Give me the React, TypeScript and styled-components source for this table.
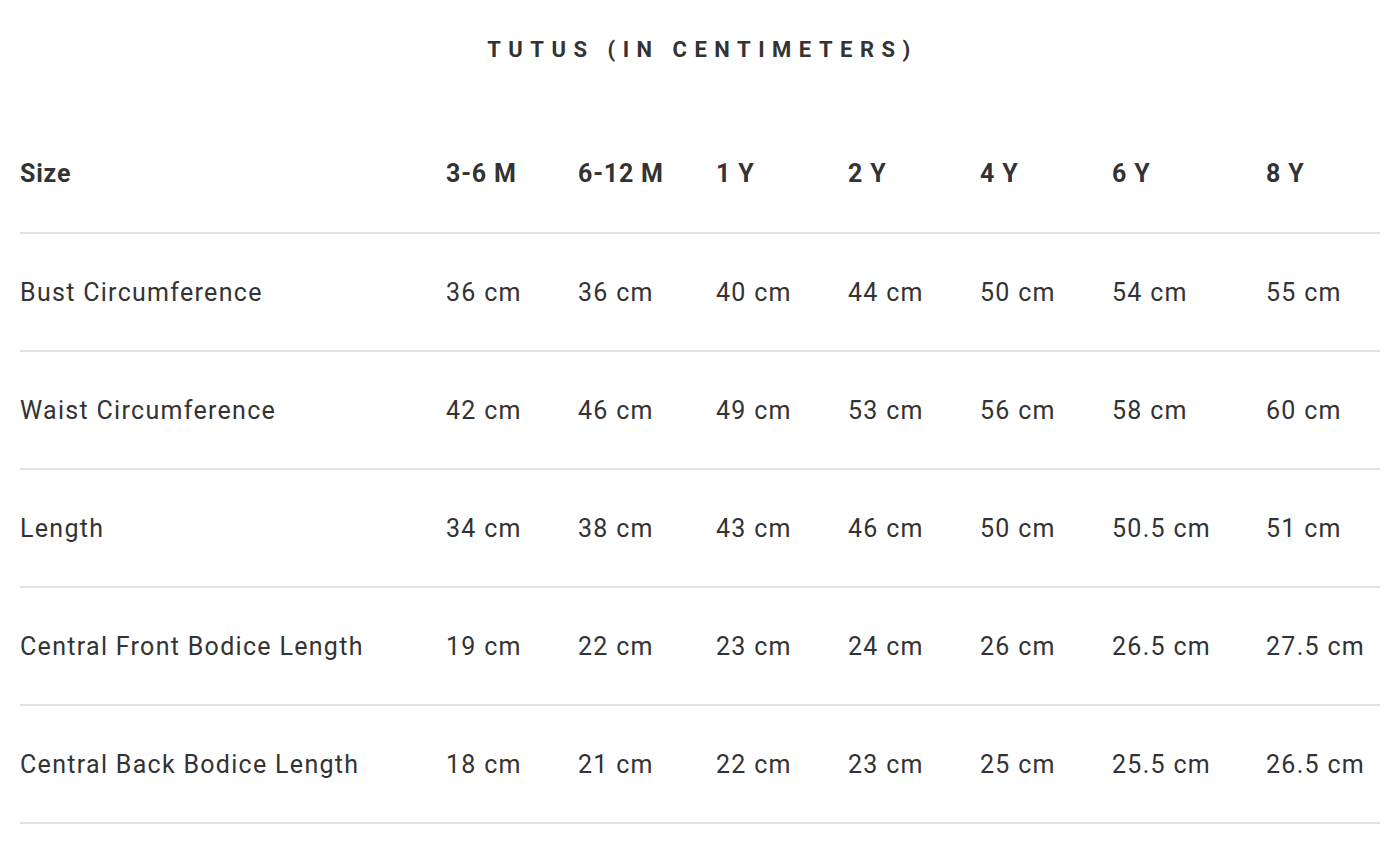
import React from "react";
import styled, { createGlobalStyle } from "styled-components";

const Global = createGlobalStyle`
  html, body { margin: 0; padding: 0; background: #fff; }
  body { font-family: "Roboto", "Liberation Sans", sans-serif; color: #333; }
`;

const Page = styled.div`
  padding: 0 20px;
`;

const Title = styled.h2`
  margin: 0;
  padding-top: 36px;
  padding-left: 5px;
  height: 115px;
  box-sizing: border-box;
  text-align: center;
  font-size: 22px;
  font-weight: 700;
  letter-spacing: 7.5px;
  line-height: 28px;
  color: #333;
`;

const Table = styled.table`
  width: 1360px;
  border-collapse: collapse;
  table-layout: fixed;
`;

const Row = styled.tr`
  height: 118px;
  border-bottom: 2px solid #e2e2e2;
`;

const Cell = styled.td<{ $head?: boolean }>`
  padding: 0;
  font-size: 25px;
  letter-spacing: ${(p) => (p.$head ? "0.8px" : "1.3px")};
  font-weight: ${(p) => (p.$head ? 700 : 400)};
  color: #333;
  text-align: left;
  vertical-align: middle;
  white-space: nowrap;
`;

const widths = [426, 132, 138, 132, 132, 132, 154, 114];

const head = ["Size", "3-6 M", "6-12 M", "1 Y", "2 Y", "4 Y", "6 Y", "8 Y"];
const rows: string[][] = [
  ["Bust Circumference", "36 cm", "36 cm", "40 cm", "44 cm", "50 cm", "54 cm", "55 cm"],
  ["Waist Circumference", "42 cm", "46 cm", "49 cm", "53 cm", "56 cm", "58 cm", "60 cm"],
  ["Length", "34 cm", "38 cm", "43 cm", "46 cm", "50 cm", "50.5 cm", "51 cm"],
  ["Central Front Bodice Length", "19 cm", "22 cm", "23 cm", "24 cm", "26 cm", "26.5 cm", "27.5 cm"],
  ["Central Back Bodice Length", "18 cm", "21 cm", "22 cm", "23 cm", "25 cm", "25.5 cm", "26.5 cm"],
];

export default function App() {
  return (
    <Page>
      <Global />
      <Title>TUTUS (IN CENTIMETERS)</Title>
      <Table>
        <colgroup>
          {widths.map((w, i) => (
            <col key={i} style={{ width: w }} />
          ))}
        </colgroup>
        <tbody>
          <Row>
            {head.map((h) => (
              <Cell key={h} $head>
                {h}
              </Cell>
            ))}
          </Row>
          {rows.map((r) => (
            <Row key={r[0]}>
              {r.map((c, i) => (
                <Cell key={i}>{c}</Cell>
              ))}
            </Row>
          ))}
        </tbody>
      </Table>
    </Page>
  );
}
